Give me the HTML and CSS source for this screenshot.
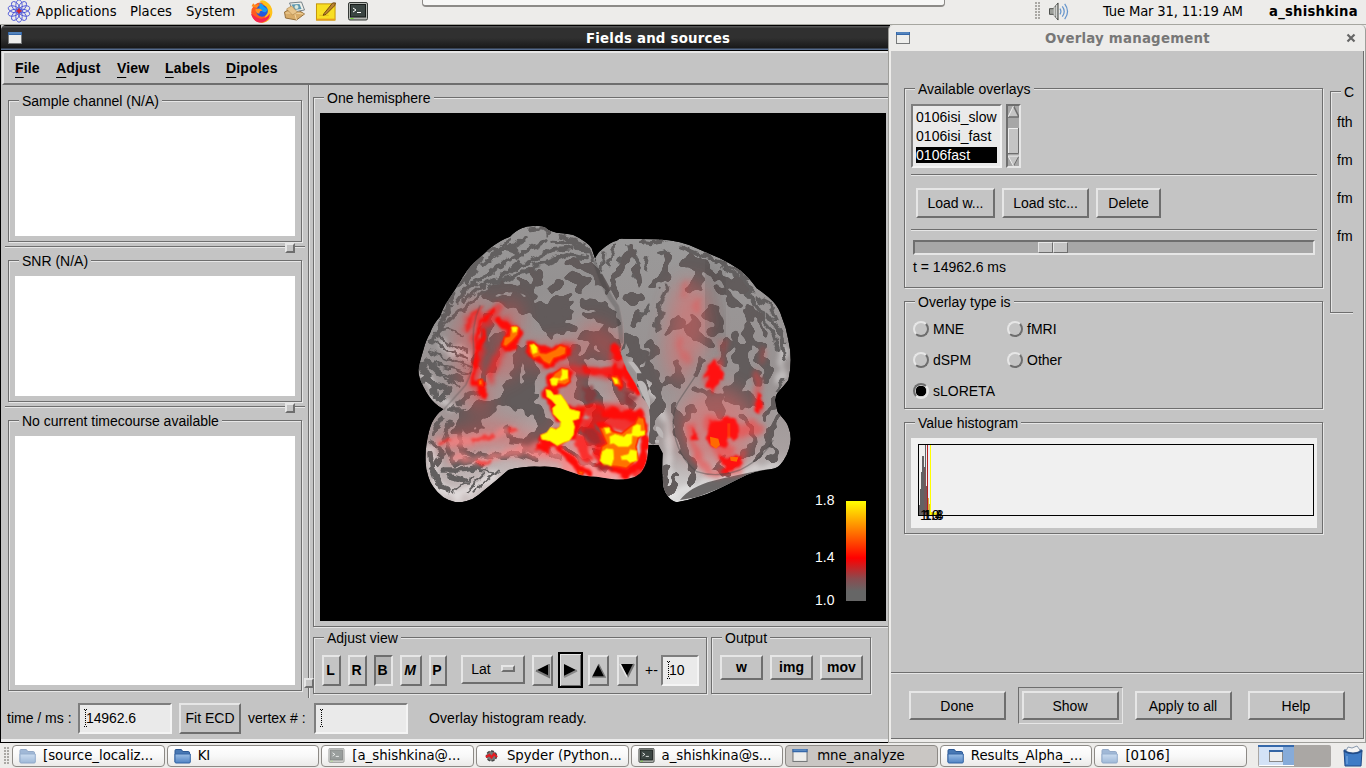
FILE: index.html
```html
<!DOCTYPE html>
<html lang="en">
<head>
<meta charset="utf-8">
<title>Fields and sources</title>
<link rel="stylesheet" href="styles.css">
</head>
<body>
<svg class="defs" width="0" height="0">
  <defs>
    <linearGradient id="fold" x1="0" y1="0" x2="0" y2="1"><stop offset="0" stop-color="#9dbfe6"/><stop offset="1" stop-color="#5083c4"/></linearGradient>
    <symbol id="i-folder" viewBox="0 0 17 16"><path d="M1 2.5Q1 1.5 2 1.5H7Q8 1.5 8.5 3.5H14.500Q15.500 3.500 15.500 5V14H1Z" fill="#4878b4" stroke="#2d5994"/><path d="M1 6H16.300V14Q16.300 15 15 15H2Q1 15 1 14Z" fill="url(#fold)" stroke="#3465a4"/></symbol>
    <symbol id="i-term" viewBox="0 0 20 20"><rect x="0.500" y="0.500" width="19" height="17.500" rx="1.500" fill="#b4b7b2" stroke="#363a37"/><rect x="2.500" y="2.500" width="15" height="12.500" fill="#3b4542" stroke="#161a18"/><path d="M5 6l3 2-3 2M9 10.500h4" stroke="#fff" fill="none"/><path d="M2.500 16.500h3" stroke="#71dc28"/></symbol>
    <symbol id="i-win" viewBox="0 0 14 12"><rect x="0.500" y="0.500" width="13" height="11" fill="#eeeeec" stroke="#77797a"/><rect x="0" y="0" width="14" height="3" fill="#3568aa"/><path d="M1 1h12" stroke="#729fcf"/></symbol>
  </defs>
</svg>
<header class="panel">
  <svg class="logo" viewBox="0 0 24 24"><g fill="none" stroke="#4a54d8" stroke-width=".9"><ellipse cx="12" cy="6.500" rx="3.200" ry="5.700"/><ellipse cx="12" cy="6.500" rx="3.200" ry="5.700" transform="rotate(36 12 12)"/><ellipse cx="12" cy="6.500" rx="3.200" ry="5.700" transform="rotate(72 12 12)"/><ellipse cx="12" cy="6.500" rx="3.200" ry="5.700" transform="rotate(108 12 12)"/><ellipse cx="12" cy="6.500" rx="3.200" ry="5.700" transform="rotate(144 12 12)"/><ellipse cx="12" cy="6.500" rx="3.200" ry="5.700" transform="rotate(180 12 12)"/><ellipse cx="12" cy="6.500" rx="3.200" ry="5.700" transform="rotate(216 12 12)"/><ellipse cx="12" cy="6.500" rx="3.200" ry="5.700" transform="rotate(252 12 12)"/><ellipse cx="12" cy="6.500" rx="3.200" ry="5.700" transform="rotate(288 12 12)"/><ellipse cx="12" cy="6.500" rx="3.200" ry="5.700" transform="rotate(324 12 12)"/></g><path d="M12 9.500v5M9.500 12h5" stroke="#d22" stroke-width="1.600"/></svg>
  <span class="pm pm1">Applications</span><span class="pm pm2">Places</span><span class="pm pm3">System</span>
  <svg class="ic ff" viewBox="0 0 22 22"><circle cx="11" cy="12" r="9.800" fill="#ff5a1f"/><path d="M9 1Q13-1 16 2Q22 6 21.300 13Q20 21 11 22Q15 17 15 13Q17 6 9 1Z" fill="#ffc21a"/><path d="M1.500 6L3 3L5 5L8 4L8 8Z" fill="#ff8a1c"/><path d="M1 13Q3 22 12 21.500Q19 20 19 13Q14 20 7 17Z" fill="#f5264f"/><circle cx="11.500" cy="10.500" r="5.600" fill="#2458dc"/><path d="M9 3Q12 3 13 6L17 9Q15 13 12 11L9 9Z" fill="#16a0f4"/><path d="M5 9Q9 7 12 10Q9 10 9 13Q6 13 5 9Z" fill="#ff9624"/></svg>
  <svg class="ic mail" viewBox="0 0 22 20"><path d="M1 11L10 6L21 13L13 19L2 17Z" fill="#d7ab68" stroke="#96703c"/><path d="M2 12L11 12L13 19M11 12L20 13" fill="none" stroke="#f1d39e"/><path d="M6 2L18 1L21 9L10 11Z" fill="#eef0ea" stroke="#77838a"/><path d="M8 3.500L16 3L18 8L11 9Z" fill="#5b97b0"/><circle cx="13" cy="6" r="2" fill="#dbe8dc"/><path d="M3 8L8 5L14 11L9 14Z" fill="#e8c48a" stroke="#a77f45" stroke-width=".6"/></svg>
  <svg class="ic note" viewBox="0 0 22 22"><rect x="1" y="3" width="19.500" height="17" fill="#f8df24" stroke="#c49304"/><path d="M1 18.500h19.500v1.800H1z" fill="#e79c1c"/><path d="M4 15h10" stroke="#e2bd18"/><path d="M9 13L18 2L21 2L20 5L11 14L8 15Z" fill="#b98334" stroke="#70470d"/></svg>
  <svg class="ic term"><use href="#i-term"/></svg>
  <span class="hidden-win"></span>
  <span class="grip"></span>
  <svg class="ic vol" viewBox="0 0 22 20"><path d="M1 7h4l5-6v18l-5-6H1Z" fill="#9ea09b" stroke="#484a47"/><path d="M6 5v10M8.500 3v14" stroke="#ddd"/><path d="M12 7q2 3 0 6M14.500 4.500q4 5.500 0 11M17 2q6 8 0 16" fill="none" stroke="#6695cc" stroke-width="1.300"/></svg>
  <span class="clock">Tue Mar 31, 11:19 AM</span><b class="user">a_shishkina</b>
</header>

<main class="mainwin">
  <div class="title dark"><svg class="wi"><use href="#i-win"/></svg><span>Fields and sources</span></div>
  <nav class="menubar"><span class="m1"><u>F</u>ile</span><span class="m2"><u>A</u>djust</span><span class="m3"><u>V</u>iew</span><span class="m4"><u>L</u>abels</span><span class="m5"><u>D</u>ipoles</span></nav>
  <div class="work">
    <section class="left">
      <div class="frame f-a"><span class="leg">Sample channel (N/A)</span><div class="plot"></div></div>
      <div class="sash"><i></i></div>
      <div class="frame f-a"><span class="leg">SNR (N/A)</span><div class="plot"></div></div>
      <div class="sash"><i></i></div>
      <div class="frame f-b"><span class="leg">No current timecourse available</span><div class="plot"></div></div>
    </section>
    <div class="vsash"><i></i></div>
    <section class="right">
      <div class="frame hemi"><span class="leg">One hemisphere</span>
        <svg class="brain" viewBox="0 0 566 508">
          <defs>
            <filter id="fold-shape" x="-5%" y="-5%" width="110%" height="110%" color-interpolation-filters="sRGB"><feTurbulence type="fractalNoise" baseFrequency=".028" numOctaves="2" seed="8" result="n"/><feDisplacementMap in="SourceGraphic" in2="n" scale="52" xChannelSelector="R" yChannelSelector="G" result="d"/><feGaussianBlur in="d" stdDeviation="3.500"/><feComponentTransfer><feFuncA type="linear" slope="7" intercept="-3"/></feComponentTransfer></filter>
            <filter id="streak" x="-5%" y="-5%" width="110%" height="110%" color-interpolation-filters="sRGB"><feTurbulence type="fractalNoise" baseFrequency=".04" numOctaves="2" seed="5" result="n"/><feDisplacementMap in="SourceGraphic" in2="n" scale="26" xChannelSelector="R" yChannelSelector="G"/></filter>
            <filter id="heat" x="-10%" y="-10%" width="120%" height="120%" color-interpolation-filters="sRGB"><feTurbulence type="fractalNoise" baseFrequency=".035" numOctaves="2" seed="3" result="n"/><feDisplacementMap in="SourceGraphic" in2="n" scale="26" xChannelSelector="R" yChannelSelector="G" result="d"/><feGaussianBlur in="d" stdDeviation="3"/></filter>
            <filter id="hot" x="-10%" y="-10%" width="120%" height="120%" color-interpolation-filters="sRGB"><feGaussianBlur stdDeviation="2"/></filter>
            <filter id="soft" x="-30%" y="-30%" width="160%" height="160%" color-interpolation-filters="sRGB"><feTurbulence type="fractalNoise" baseFrequency=".03" numOctaves="2" seed="12" result="n"/><feDisplacementMap in="SourceGraphic" in2="n" scale="40" xChannelSelector="R" yChannelSelector="G" result="d"/><feGaussianBlur in="d" stdDeviation="8"/></filter>
            <filter id="haze" x="-30%" y="-30%" width="160%" height="160%" color-interpolation-filters="sRGB"><feGaussianBlur stdDeviation="30"/></filter>
            <linearGradient id="gl" x1="0" y1="0" x2=".25" y2="1"><stop offset="0" stop-color="#9b9a9a"/><stop offset=".35" stop-color="#949191"/><stop offset=".75" stop-color="#a69a9a"/><stop offset="1" stop-color="#d0c6c6"/></linearGradient>
            <linearGradient id="gr" x1="0" y1="0" x2="0" y2="1"><stop offset="0" stop-color="#9a9999"/><stop offset=".5" stop-color="#989292"/><stop offset=".8" stop-color="#a8a0a0"/><stop offset="1" stop-color="#dedede"/></linearGradient>
            <linearGradient id="bar" x1="0" y1="0" x2="0" y2="1"><stop offset="0" stop-color="#ff0"/><stop offset=".57" stop-color="#f00"/><stop offset=".78" stop-color="#884c50"/><stop offset=".9" stop-color="#666"/><stop offset="1" stop-color="#666"/></linearGradient>
            <path id="lh" d="M400 48Q420 46 435 52Q450 65 470 68Q500 70 520 75Q540 84 555 95Q570 105 575 115Q580 130 585 145Q590 165 600 180L620 215L655 280Q670 305 672 345V400Q664 415 662 430L680 480L705 520L725 560Q745 580 748 600Q752 630 750 660L745 700Q745 735 740 750Q735 775 720 790Q705 803 690 805Q660 810 640 808L590 800Q560 799 540 795L480 775Q450 768 420 770Q395 768 370 772Q345 774 325 780L290 810L235 855Q220 868 200 873Q180 879 165 876Q145 872 130 862Q112 848 100 830Q90 818 85 800Q76 775 77 750Q76 725 80 700Q85 665 95 640Q110 610 130 598Q115 590 105 580Q85 560 70 530Q55 500 55 480Q60 450 70 420Q78 390 90 370Q100 340 120 320Q130 290 145 270L180 215Q200 180 220 160L270 115Q300 90 330 80Q350 60 365 55Q380 48 400 48Z"/>
            <path id="rh" d="M45 145Q55 125 70 115Q90 97 110 92Q120 84 130 86Q180 86 230 88Q270 90 300 97Q325 103 350 115L420 145Q450 160 480 180Q510 205 530 235Q560 255 580 275Q598 295 605 320Q620 355 625 390Q632 420 632 450Q632 480 625 510Q610 530 600 540Q588 550 585 570Q588 595 595 610Q620 635 625 650Q633 670 632 690Q630 715 620 735Q610 755 600 765Q588 776 570 778Q530 782 500 795Q450 820 420 835Q380 855 350 862Q320 873 290 877Q275 873 265 860Q253 845 250 830Q245 780 248 730L235 705L200 705L120 450Z"/>
            <clipPath id="cl"><use href="#lh"/></clipPath><clipPath id="cr"><use href="#rh"/></clipPath>
          </defs>
          <rect width="566" height="508"/>
          <g transform="translate(260 97) scale(.33333)" clip-path="url(#cr)">
            <use href="#rh" fill="url(#gr)"/>
            <g filter="url(#soft)" fill="none" stroke="#fff" opacity=".4" stroke-width="20"><path d="M260 860L400 815L520 780L600 765M150 440L230 560L265 660L265 850M610 400L600 520"/></g>
            <g filter="url(#streak)" fill="none" stroke="#625f5f" stroke-linecap="round" stroke-linejoin="round" stroke-width="12"><path d="M70 130L65 175M150 110L120 155M105 110L80 160M185 95L210 100L250 90M165 130L175 160L160 200M200 140L195 180M240 130L265 125M300 110L350 130L385 145M410 150L460 175L500 205M370 135L430 170L470 200L510 250M530 265L570 285L590 330M490 240L530 285L555 330M560 310L590 350L615 400M480 200L520 245M260 230L240 290L225 350M245 310L235 360M170 330L210 290M545 330L580 370L595 420M600 360L617 450M610 510L590 540"/></g>
            <g filter="url(#fold-shape)" fill="none" stroke="#625c5c" stroke-linecap="round" stroke-linejoin="round">
              <g stroke-width="26"><path d="M150 125L130 160L115 195M270 150L245 200L225 230M320 160L350 180L355 220L330 235M325 150L370 160L380 190M415 235L445 250L465 280M400 190L440 210L490 240M165 170L180 220M95 215L100 245L85 270M145 265L190 265M295 330L260 370M340 330L340 370L390 400M385 315L405 365M210 400L230 440M500 345L510 395L540 420L555 465M470 380L480 470L460 550L510 590M440 400L430 460M540 420L560 500M290 460L300 515L260 520M135 370L190 430L230 520L240 600M200 470L235 560L220 640"/></g>
              <g stroke-width="17"><path d="M155 345L180 310M480 310L510 320M500 290L550 330L560 370M340 490L370 450M150 440L165 450M500 440L540 520M580 580L550 620M600 600L560 710L520 750M400 560L410 580M340 590L300 640L310 700L340 760M345 540L380 560M480 610L520 660L510 720L450 760M290 590L285 660L330 760M560 680L600 730L570 750M295 790L265 850M340 740L330 820M430 740L400 780L450 790M250 780L255 830"/></g>
              <path stroke-width="42" d="M440 550L520 580M390 560L420 600M330 350L350 380M490 420L490 500M400 300L410 360"/>
              <path stroke-width="22" d="M10 220L70 280L110 350L125 420M150 390L190 530L220 690"/>
            </g>
            <path d="M300 870Q330 830 400 812Q470 795 560 778L500 795L420 835L350 862Z" fill="#6a6767"/>
            <g fill="#bcb8b8"><path d="M145 455L160 455Q175 470 185 490L170 490ZM170 515Q190 505 200 530L210 570V600L190 560ZM228 650Q240 645 250 670V685Q235 680 228 660ZM225 690h12v8h-12Z"/></g>
            <g filter="url(#haze)" fill="#ff6060" opacity=".42"><ellipse cx="330" cy="330" rx="60" ry="120"/><ellipse cx="410" cy="650" rx="115" ry="120"/><ellipse cx="300" cy="410" rx="40" ry="110"/></g>
            <g filter="url(#soft)" fill="none" stroke="#ff3838" stroke-linecap="round"><path opacity=".28" stroke-width="22" d="M320 220L315 250M355 270L350 300M290 390L320 450M430 400L420 460M545 420L550 450"/><path opacity=".5" stroke-width="22" d="M530 500L535 600M330 650L345 720L390 790L470 780L490 740"/><path opacity=".5" stroke-width="50" d="M400 640L440 740M400 470L395 520M470 660h50"/></g>
            <g filter="url(#heat)" fill="#f11"><path d="M407 440L415 475L438 490L435 505L415 510L398 545L375 530L388 500L370 500L385 465ZM395 632L468 622L474 660L460 690L445 680L435 712L392 712L380 690L388 660ZM415 740L485 740L488 760L455 790L430 790L430 765ZM530 540L545 555L540 610L530 600ZM340 650L350 690L335 690Z"/></g>
            <g filter="url(#hot)" fill="#ff6a00"><path d="M390 680L415 686L420 705L408 716L392 705ZM450 740L475 742L470 755L452 752Z"/><path d="M442 640h9v45h-9Z" opacity=".4"/></g>
            <path d="M345 500Q325 530 305 560Q275 600 280 650Q290 740 350 785Q410 805 480 780Q550 745 580 690" fill="none" stroke="#444" stroke-width="4" opacity=".4"/>
            <path d="M390 160Q380 280 425 400" fill="none" stroke="#222" stroke-width="50" opacity=".2" filter="url(#haze)"/>
          </g>
          <g transform="translate(80 97) scale(.33333)" clip-path="url(#cl)">
            <use href="#lh" fill="url(#gl)"/>
            <g filter="url(#soft)" fill="none" stroke="#fff" opacity=".45" stroke-width="26"><path d="M90 700L115 830L170 860L290 790M70 480L100 560L160 590M110 400L210 440M500 775L700 800"/></g>
            <g filter="url(#streak)" fill="none" stroke="#625f5f" stroke-linecap="round" stroke-linejoin="round">
              <g stroke-width="12"><path d="M385 58L425 55L445 70M480 78L530 92L565 120L578 150M460 95L520 100L560 130M440 90L390 115L330 145L280 185M380 85L340 110L300 120L250 165M330 85L290 120L265 115M520 115L460 120L410 145L350 175M555 145L500 135L450 155L400 165M240 135L205 185L170 235M300 160L250 205L200 235L170 275M360 155L300 205L240 230L190 270M400 175L330 200L250 245L190 300M160 250L135 300M180 300L130 345L105 370M150 290L120 340L95 400"/></g>
              <g stroke-width="7"><path d="M110 375L160 410L205 425M100 390L150 425L205 445M90 425L140 445L215 475M100 460L210 490M110 480L190 515M90 470L175 530M120 350L185 375"/></g>
              <path stroke-width="20" d="M65 465L85 500L65 515M90 515L150 540L120 570M100 530L105 560M150 510L180 500M80 455L120 490M240 145L220 180L200 215M320 110L345 120M375 125L350 140M275 140L300 130"/>
              <g stroke-width="17"><path d="M175 580L210 550L240 545M150 600L190 600M125 625L100 670M150 640L130 690M100 700L130 730L110 760M140 700L160 760L220 750M180 680L190 730L270 740M320 650L330 690L380 700M130 780L180 780L240 770M100 780L120 830L150 840M150 800L190 810M280 740L350 730L410 750M370 720L430 720L480 740M90 730L95 780"/></g>
              <path stroke-width="6" d="M220 800L160 850M255 790L200 845M285 785L220 845M240 780L300 785"/>
            </g>
            <g filter="url(#fold-shape)" fill="none" stroke="#625b5b" stroke-linecap="round" stroke-linejoin="round">
              <g stroke-width="27"><path d="M515 165L560 160L590 190L620 240M500 195L560 215L535 240M395 180L420 200L410 220M455 230L475 228M275 240L345 225L395 245L385 270L340 265M265 255L330 285L400 305L440 290M555 275L590 285L640 310M450 330L470 275L505 270L500 310L450 350L520 350L450 375M550 380L585 375L560 440M610 360L640 385M600 320L645 340M570 430L610 440"/></g>
              <g stroke-width="37"><path d="M405 300L440 350M395 285L480 310M460 350L480 360M610 390L650 440M265 330L255 400L240 460M310 380L270 460L245 520M350 430L345 500L310 570L260 600L210 650M380 420L400 500L370 580L400 600M520 430L550 500L555 580M590 560L600 620L570 680M650 520L680 580M560 660L620 690M410 600L440 650L390 700M250 590L190 620L170 655M360 540L335 580"/></g>
              <path stroke-width="20" d="M500 720L560 760L620 775M580 720L630 740M660 560L700 540M630 500L670 550M560 320L600 310"/>
            </g>
            <g filter="url(#haze)" fill="none" stroke="#ff4040" stroke-width="60" stroke-linecap="round" opacity=".42"><path d="M230 300L200 380L215 520L240 580M330 300L310 480M140 700L300 670L420 720L600 750M580 370L650 430L700 600L620 700M400 440L520 430L500 660"/></g>
            <g filter="url(#soft)" fill="none" stroke="#ff2020" stroke-linecap="round" stroke-linejoin="round" opacity=".65"><path stroke-width="26" d="M290 300L240 350L235 430L220 510L250 550M310 330L345 380L305 420L270 500M400 410L435 460L505 410M455 530L495 480L550 485L640 490M600 590L670 600L720 640M560 650L590 730L700 780M640 420L700 540M195 350L240 310"/><path stroke="#ff8080" stroke-width="24" d="M120 700L250 685L340 660M160 745L250 750L410 710L540 770"/><path stroke="#ff7a7a" stroke-width="34" d="M500 780L620 795L700 790M540 700L560 760M470 720L400 730"/></g>
            <g filter="url(#heat)" fill="none" stroke="#ff0c08" stroke-linejoin="round" stroke-linecap="round">
              <path stroke-width="10" d="M280 300L242 335L232 390L227 460L212 525M255 360L238 420"/>
              <path opacity=".55" stroke-width="8" d="M250 290L205 325L202 365"/>
              <path stroke-width="20" d="M222 520L245 520L250 560"/>
              <path opacity=".55" stroke-width="14" d="M220 695L280 675M330 665L345 660M120 700L145 690M240 760L270 755"/>
              <path stroke-width="18" d="M415 710L440 720M300 335L330 355M475 715L500 735L540 780L570 795"/>
              <path stroke-width="44" d="M322 405L348 370"/>
              <path stroke-width="46" d="M400 415L440 450L490 425M465 515L495 495M450 550L480 610L530 610L510 670L440 690"/>
              <path opacity=".75" stroke-width="30" d="M560 480L690 490L710 530M540 595L600 600L700 620"/>
              <path stroke-width="24" d="M640 415L655 440M675 480L715 545M645 470L665 530M610 610L720 610L740 700L725 770M610 650L640 680L690 700M600 760L680 795L725 750"/>
              <path opacity=".7" stroke-width="34" d="M550 640L600 690L600 740L720 790M540 690L560 740M640 640L720 620M580 630L700 650"/>
            </g>
            <g filter="url(#hot)" fill="#ff7300" stroke="#ff2a00" stroke-width="5" stroke-linejoin="round"><path d="M332 352Q345 345 357 355L354 375L338 393L318 410L308 405L313 382L328 378ZM388 402Q405 398 413 408L422 428L438 430L465 418L480 405L499 412L497 432L480 440L462 445L450 465L430 455L418 440L400 445L388 425ZM450 515L463 490L485 475L505 478L510 515L495 525L475 522L460 533ZM635 500L652 498L660 510L665 528L645 525ZM235 510L247 508L248 527L236 525ZM600 655L620 648L640 665L665 670L690 650L705 640L715 620L732 625L738 665L715 685L708 710L715 745L695 762L680 775L650 770L610 768L600 735L605 710L620 700ZM535 782L550 785L548 795L535 792Z"/></g>
            <g filter="url(#hot)" fill="#ff0" stroke="#ffb000" stroke-width="3" stroke-linejoin="round"><path d="M334 352Q345 347 353 352L350 366L338 368ZM390 405L402 402L412 412V428L398 432ZM485 477L503 480L504 505L485 512L475 510L470 526L455 526L450 508L460 502L480 506L485 495ZM438 538L452 542L462 555L482 553L498 575L510 597L540 605L537 626L518 632L524 650L520 675L508 692L490 698L472 707L450 693L425 688L422 675L440 668L452 652L468 658L480 650L482 635L460 612L457 595L468 585L455 570L440 560ZM637 502L652 507L655 520L645 522ZM612 654L628 652L632 668L618 672ZM628 680L645 672L672 680L680 672L695 670L698 650L712 642L722 645V662H735L734 675L715 680L697 678L696 700L685 710L655 710L640 700L630 703ZM606 725L620 715L640 718L642 745L634 768L610 762L600 752ZM662 738L685 732L690 718L710 722L712 752L690 758L680 750L665 750Z"/></g>
            <g filter="url(#heat)" fill="#8e3236" opacity=".7"><path d="M555 650L590 660L600 690L575 705L550 680ZM545 530L580 525L590 570L560 585ZM590 765h35l15 16h-40ZM670 550L710 560L700 590L680 580Z"/></g>
            <path d="M240 285Q212 350 221 420Q220 480 197 525L130 600" fill="none" stroke="#4d4848" stroke-width="4" opacity=".4"/>
            <path d="M585 150Q610 240 650 290Q662 340 664 400" fill="none" stroke="#333" stroke-width="14" opacity=".25"/>
          </g>
          <g class="scale-text"><text x="495" y="392">1.8</text><text x="495" y="449">1.4</text><text x="495" y="492">1.0</text></g>
          <rect x="526" y="388" width="20" height="100" fill="url(#bar)"/>
        </svg>
      </div>
      <div class="controls">
        <div class="frame adj"><span class="leg">Adjust view</span>
          <div class="row">
            <button class="l">L</button><button class="r">R</button><button class="b">B</button><button class="m">M</button><button class="p">P</button>
            <button class="lat">Lat<i></i></button>
            <button class="ar"><svg viewBox="0 0 17 27"><path d="M15 7V20L2 13.500Z"/><path d="M2 13.500L15 20V7" fill="none" stroke="#777" stroke-width="2"/></svg></button>
            <button class="ar on"><svg viewBox="0 0 17 27"><path d="M2 7V20L15 13.500Z"/><path d="M2 20L15 13.500" stroke="#888" stroke-width="2"/></svg></button>
            <button class="ar up"><svg viewBox="0 0 17 27"><path d="M2 20H15L8.500 7Z"/><path d="M2 20H15L8.500 7" fill="none" stroke="#777" stroke-width="1.500"/></svg></button>
            <button class="ar dn"><svg viewBox="0 0 17 27"><path d="M2 7H15L8.500 20Z"/><path d="M15 7L8.500 20" stroke="#777" stroke-width="2"/><path d="M1 7L8 20" stroke="#e6e6e6" stroke-width="1.500"/></svg></button>
            <span class="pm-label">+-</span><span class="field f10"><i class="caret"></i>10</span>
          </div>
        </div>
        <div class="frame out"><span class="leg">Output</span><div class="row"><button>w</button><button>img</button><button>mov</button></div></div>
      </div>
    </section>
  </div>
  <footer class="status"><span class="s1">time / ms :</span><span class="field"><i class="caret"></i>14962.6</span><button>Fit ECD</button><span class="s2">vertex # :</span><span class="field"><i class="caret"></i></span><span class="s3">Overlay histogram ready.</span></footer>
</main>

<aside class="overlay">
  <div class="title light"><svg class="wi"><use href="#i-win"/></svg><span>Overlay management</span><svg class="close" viewBox="0 0 10 10"><path d="M1.500 1.500L8.500 8.500M8.500 1.500L1.500 8.500" stroke="#666" stroke-width="2.200"/></svg></div>
  <div class="obody">
    <div class="ocols">
      <div class="ocol">
        <div class="frame avail"><span class="leg">Available overlays</span>
          <div class="lists"><div class="list"><span>0106isi_slow</span><span>0106isi_fast</span><span class="sel">0106fast</span></div>
            <div class="scroll"><svg viewBox="0 0 11 60"><path d="M5.500 0L11 11H0Z" fill="#c4c4c4"/><path d="M0 11H11L5.500 0" fill="none" stroke="#6e6e6e" stroke-width="1.500"/><path d="M5.500 0L0 11" stroke="#eee"/><rect x="0" y="22" width="11" height="26" fill="#c4c4c4"/><path d="M.5 48V22.500H11" fill="none" stroke="#eee"/><path d="M0 47.500H10.500V22" fill="none" stroke="#6e6e6e"/><path d="M0 50H11L5.500 60Z" fill="#c4c4c4"/><path d="M11 50L5.500 60" stroke="#6e6e6e"/><path d="M5.500 60L0 50H11" fill="none" stroke="#eee"/></svg></div></div>
          <hr><div class="obtns"><button class="lw">Load w...</button><button class="ls">Load stc...</button><button class="de">Delete</button></div><hr>
          <div class="slider"><i></i><i></i></div><div class="tms">t = 14962.6 ms</div>
        </div>
        <div class="frame otype"><span class="leg">Overlay type is</span><div class="radios"><span><i></i>MNE</span><span><i></i>fMRI</span><span><i></i>dSPM</span><span><i></i>Other</span><span><i class="sel"></i>sLORETA</span></div></div>
        <div class="frame histo"><span class="leg">Value histogram</span>
          <svg viewBox="0 0 406 90"><rect width="406" height="90" fill="#f0f0f0"/><path d="M8 77V67H9V51H10V34H11V18H13V29H14V7H15V48H17V77Z" fill="#636163"/><path d="M13 77V30H15V48H17V77Z" fill="#74595b"/><path d="M16.500 7v70" stroke="#b81b1e"/><path d="M17 77V60H18V66H20V74H23V76H31V78Z" fill="#d7b13c"/><path d="M19.500 7v70" stroke="#ff0"/><path d="M20 75.500h9" stroke="#ee0" stroke-width="2"/><rect x="7.500" y="6.500" width="395" height="71" fill="none" stroke="#000"/><g class="ht"><text x="9" y="82">1.0</text><text x="12" y="82">1.4</text><text x="13" y="82">1.8</text></g></svg>
        </div>
      </div>
      <div class="cut frame"><span class="leg">C</span><span>fth</span><span>fm</span><span>fm</span><span>fm</span></div>
    </div>
    <div class="actions"><button>Done</button><span class="ring"><button>Show</button></span><button>Apply to all</button><button>Help</button></div>
  </div>
</aside>

<footer class="taskbar">
  <span class="grip"></span>
  <div class="tasks">
    <span class="t dim"><svg><use href="#i-folder"/></svg>[source_localiz...</span>
    <span class="t"><svg><use href="#i-folder"/></svg>KI</span>
    <span class="t dim"><svg><use href="#i-term"/></svg>[a_shishkina@...</span>
    <span class="t"><svg viewBox="0 0 16 16"><circle cx="8" cy="8" r="5" fill="#777" stroke="#444" stroke-width="1.500" stroke-dasharray="3 1.500"/><path d="M2.500 9L6 7L8 9.500L10.500 6L13.500 9" fill="none" stroke="#e31c22" stroke-width="2.200"/></svg>Spyder (Python...</span>
    <span class="t"><svg><use href="#i-term"/></svg>a_shishkina@s...</span>
    <span class="t act"><svg class="w"><use href="#i-win"/></svg>mne_analyze</span>
    <span class="t"><svg><use href="#i-folder"/></svg>Results_Alpha_...</span>
    <span class="t dim"><svg><use href="#i-folder"/></svg>[0106]</span>
  </div>
  <svg class="pager" viewBox="0 0 73 22"><rect width="73" height="22" rx="2" fill="#aaa7a4"/><path d="M1 1H36V20H1Z" fill="#d3e2f6"/><path d="M25 1H36V20H25Z" fill="#86abd9"/><path d="M0 1H36" stroke="#3568aa" stroke-width="2"/><path d="M1 20.500H36" stroke="#fff"/><rect x="11.500" y="5.500" width="13" height="11" fill="#eee" stroke="#888"/><path d="M11 6h14" stroke="#3465a4" stroke-width="2"/></svg>
  <svg class="trash" viewBox="0 0 20 22"><path d="M1 5H19L18 21H2Z" fill="#3f7cc6" stroke="#204a87"/><path d="M3 6L5 2L9 3L14 1L17 5L16 7Q10 9 4 7Z" fill="#f4f4f4" stroke="#8899ad"/><path d="M1 6Q10 11 19 6" fill="none" stroke="#214c89" stroke-width="1.600"/><path d="M4 11V19" stroke="#80afe6"/></svg>
</footer>
</body>
</html>
```

FILE: styles.css
```css
* { box-sizing: border-box; }
body { margin: 0; width: 1366px; height: 768px; overflow: hidden; background: #edecea; position: relative; font: 14px/16px "Liberation Sans", Arial, sans-serif; color: #000; }
.defs { position: absolute; }
svg { display: block; flex: none; }
button { font: inherit; color: #000; padding: 0; margin: 0; background: #c4c4c4; border: 2px solid; border-color: #e6e6e6 #6e6e6e #6e6e6e #e6e6e6; border-radius: 0; white-space: nowrap; flex: none; }
span { white-space: nowrap; }

.panel { height: 25px; display: flex; align-items: center; padding-bottom: 2px; border-bottom: 1px solid #a6a6a0; background: #edecea; font: 13.2px/22px "DejaVu Sans", sans-serif; }
.pm, .clock, .user { padding-top: 2px; }
.logo { width: 24px; height: 24px; margin-left: 7px; margin-right: 5px; }
.pm1 { width: 94px; }
.pm2 { width: 56px; }
.pm3 { width: 64px; }
.ff { width: 23px; height: 23px; margin-top: 1px; }
.mail { width: 23px; height: 20px; margin-left: 10px; }
.note { width: 22px; height: 21px; margin-left: 9px; margin-right: 1px; }
.term { width: 20px; height: 20px; margin-left: 10px; margin-right: 1px; margin-top: 2px; }
.hidden-win { width: 523px; height: 7px; margin-left: 53px; align-self: flex-start; border: 1px solid #8d8b88; border-width: 0 1px 2px; border-radius: 0 0 4px 4px; background: #f7f7f6; }
.grip { width: 5px; height: 18px; background: radial-gradient(circle at 1px 1px, #aaa8a4 .8px, transparent 1px) 0 0 / 3px 3px; flex: none; }
.panel .grip { margin-left: 90px; }
.vol { width: 22px; height: 19px; margin-left: 8px; margin-top: 1px; }
.clock { margin-left: 33px; width: 166px; letter-spacing: -.19px; }
.user { letter-spacing: .25px; }

.mainwin { position: absolute; left: 0; top: 25px; width: 890px; height: 718px; background: #c4c4c4; border-left: 1px solid #000; border-bottom: 1px solid #000; box-shadow: inset 0 -3px #ececec; }
.title { height: 26px; display: flex; align-items: center; font: bold 13.33px/24px "DejaVu Sans", sans-serif; letter-spacing: .22px; }
.title span { padding-top: 2px; }
.title .wi { width: 14px; height: 12px; }
.dark { background: linear-gradient(#000 0 1px, #555 1px 2px, #303030 3px 13px, #191919 23px, #556b8d 24px 25px, #000 25px); color: #fff; border-radius: 5px 0 0; padding-left: 7px; }
.dark span { margin-left: 564px; }
.menubar { height: 34px; margin-left: 1px; border-top: 2px solid #e6e6e6; border-left: 2px solid #e6e6e6; border-bottom: 2px solid #6e6e6e; padding: 7px 0 0 11px; font-weight: bold; display: flex; }
.menubar u { text-underline-offset: 4px; text-decoration-thickness: 1px; }
.m1 { width: 41px; } .m2 { width: 61px; } .m3 { width: 48px; } .m4 { width: 61px; }
.menubar span { letter-spacing: .15px; }

.work { height: 613px; display: flex; overflow: hidden; }
.frame { border: 1px solid #6e6e6e; box-shadow: 1px 1px #e6e6e6, inset 1px 1px #e6e6e6; }
.leg { display: block; width: max-content; height: 16px; margin: -8px 0 0 10px; padding: 0 3px; background: #c4c4c4; }
.left { width: 307px; padding: 15px 0 0 4px; flex: none; }
.left .frame { width: 294px; margin-left: 3px; }
.left .plot { width: 280px; height: 120px; background: #fff; margin: 7px 0 0 6px; }
.f-a { height: 142px; }
.f-b { height: 271px; }
.left .f-b .plot { height: 249px; }
.sash { height: 18px; width: 300px; background: linear-gradient(#6e6e6e 0 1px, #e6e6e6 1px 2px) 0 4px / 100% 2px no-repeat; padding: 1px 0 0 280px; }
.sash i, .vsash i { display: block; width: 10px; height: 10px; background: #c4c4c4; border: 2px solid; border-color: #e6e6e6 #6e6e6e #6e6e6e #e6e6e6; }
.vsash { width: 2px; flex: none; background: linear-gradient(90deg, #6e6e6e 0 1px, #e6e6e6 1px 2px); position: relative; }
.vsash i { position: absolute; left: -4px; top: 593px; z-index: 1; }
.right { width: 585px; padding: 12px 0 0 3px; flex: none; }
.hemi { width: 600px; height: 530px; }
.brain { width: 566px; height: 508px; margin: 7px 0 0 6px; }
.scale-text { fill: #fff; font: 14px "Liberation Sans", sans-serif; }
.controls { display: flex; margin-top: 10px; gap: 4px; }
.adj { width: 394px; height: 57px; }
.out { width: 160px; height: 57px; }
.row { display: flex; align-items: center; height: 32px; margin: 8px 0 0 8px; font-weight: bold; }
.row button { height: 31px; width: 19px; margin-right: 7px; padding-right: 2px; }
.row .b { border-color: #6e6e6e #e6e6e6 #e6e6e6 #6e6e6e; background: #b4b4b4; }
.row .m { width: 22px; font-style: italic; }
.row .p { width: 18px; margin-right: 14px; }
.row .lat { width: 64px; height: 29px; font-weight: normal; display: flex; align-items: center; justify-content: center; gap: 10px; margin-top: -2px; padding: 0 0 1px; }
.lat i { width: 14px; height: 7px; border: 2px solid; border-color: #e6e6e6 #6e6e6e #6e6e6e #e6e6e6; }
.row .ar { width: 21px; margin-right: 5px; padding: 0; }
.ar svg { width: 17px; height: 27px; }
.row .ar.on { width: 25px; height: 36px; border: 2px solid #000; padding: 0 2px; box-shadow: inset 1px 1px #e6e6e6, inset -1px -1px #6e6e6e; }
.row .up { margin-right: 8px; }
.row .dn { margin-right: 7px; }
.pm-label { width: 16px; font-weight: normal; }
.field { display: flex; align-items: center; width: 94px; height: 31px; padding-left: 4px; border: 2px solid; border-color: #7e7e7e #f4f4f4 #f4f4f4 #7e7e7e; background: #eaeaea; font-weight: normal; flex: none; letter-spacing: -.1px; }
.f10 { width: 38px; }
.caret { width: 3px; height: 18px; background: repeating-linear-gradient(#000 0 1px, transparent 1px 2px) 1px 0 / 1px 100% no-repeat; border: dotted #000; border-width: 1px 0; flex: none; margin-right: -1px; }
.out .row { margin-top: 9px; height: 24px; }
.out .row button { width: 43px; height: 25px; line-height: 18px; padding: 0; }
.status { display: flex; align-items: center; height: 42px; margin: -1px 0 0 6px; }
.s1 { width: 71px; }
.status button { width: 62px; height: 31px; margin: 0 7px; }
.s2 { width: 66px; }
.s3 { margin-left: 21px; letter-spacing: .1px; }

.overlay { position: absolute; left: 888px; top: 25px; width: 478px; height: 718px; background: #edecea; border: 1px solid #9e9e9a; border-top: 0; border-radius: 5px 5px 0 0; }
.light { color: #777; padding-left: 7px; }
.light span { margin-left: 135px; flex: 1; }
.close { width: 10px; height: 10px; margin-right: 9px; }
.obody { margin-left: 2px; width: 473px; height: 688px; background: #c4c4c4; border-right: 1px solid #6e6e6e; border-bottom: 1px solid #6e6e6e; }
.ocols { height: 622px; display: flex; padding: 37px 0 0 13px; border-bottom: 1px solid #6e6e6e; box-shadow: 0 1px #e6e6e6; }
.ocol { width: 419px; flex: none; }
.avail { height: 200px; }
.lists { display: flex; margin: 7px 0 0 6px; height: 64px; gap: 4px; }
.list { width: 91px; border: 2px solid; border-color: #7e7e7e #f4f4f4 #f4f4f4 #7e7e7e; background: #eaeaea; padding: 3px; }
.list span { display: block; height: 16px; margin-bottom: 3px; width: 81px; letter-spacing: .05px; }
.list .sel { background: #000; color: #fff; }
.scroll { width: 15px; background: #a7a7a7; border: 2px solid; border-color: #6e6e6e #e6e6e6 #e6e6e6 #6e6e6e; }
.scroll svg { width: 11px; height: 60px; }
hr { height: 2px; border: 0; border-top: 1px solid #6e6e6e; border-bottom: 1px solid #e6e6e6; margin: 6px 5px 0 6px; }
.obtns { display: flex; margin: 12px 0 0 11px; gap: 7px; }
.obtns button { height: 30px; }
.obtns + hr { margin-top: 11px; }
.lw { width: 79px; } .ls { width: 87px; } .de { width: 65px; }
.slider { display: flex; width: 402px; height: 15px; margin: 9px 0 0 8px; padding-left: 123px; background: #a7a7a7; border: 2px solid; border-color: #6e6e6e #e6e6e6 #e6e6e6 #6e6e6e; }
.slider i { width: 15px; height: 11px; background: #c4c4c4; border: 1px solid; border-color: #e6e6e6 #6e6e6e #6e6e6e #e6e6e6; }
.tms { margin: 4px 0 0 8px; }
.otype { height: 108px; margin-top: 13px; }
.radios { display: grid; grid-template-columns: 94px 100px; grid-auto-rows: 31px; align-items: center; margin: 3px 0 0 8px; }
.radios span { display: flex; align-items: center; gap: 4px; }
.radios i { width: 16px; height: 16px; border-radius: 50%; border: 2px solid; border-color: #e6e6e6 #6e6e6e #6e6e6e #e6e6e6; }
.radios .sel { border-color: #6e6e6e #e6e6e6 #e6e6e6 #6e6e6e; background: radial-gradient(circle, #000 5px, transparent 5.500px); }
.histo { height: 112px; margin-top: 13px; }
.histo svg { width: 406px; height: 90px; margin: 7px 0 0 6px; }
.ht { font: 14px "Liberation Sans", sans-serif; }
.cut { width: 23px; height: 222px; margin: 3px 0 0 7px; border-right: 0; box-shadow: 0 1px #e6e6e6, inset 1px 1px #e6e6e6; }
.cut span { display: block; height: 38px; padding-left: 6px; }
.cut .leg { height: 30px; margin: -8px 0 0 10px; padding: 0 0 0 3px; background: linear-gradient(#c4c4c4 0 0) 0 0 / 100% 16px no-repeat; }
.actions { display: flex; align-items: center; height: 65px; padding-left: 18px; gap: 16px; }
.actions button { width: 97px; height: 29px; padding-right: 1px; }
.ring { padding: 3px; margin: 0 -4px; border: 1px solid; border-color: #6e6e6e #e6e6e6 #e6e6e6 #6e6e6e; }

.taskbar { position: absolute; left: 0; top: 743px; width: 1366px; height: 25px; display: flex; align-items: center; background: #edecea; font: 13.33px/20px "DejaVu Sans", sans-serif; }
.taskbar .grip { margin-left: 4px; margin-right: 3px; }
.tasks { display: grid; grid-template-columns: repeat(8, 1fr); gap: 2px; width: 1235px; flex: none; }
.t { display: flex; align-items: center; height: 22px; padding-left: 6px; gap: 7px; letter-spacing: -.02px; border: 1px solid #8d8a86; border-radius: 4px; background: linear-gradient(#fff, #f8f8f8 50%, #ebeae8); }
.t svg { width: 17px; height: 16px; }
.t .w { width: 16px; height: 13px; margin-right: 2px; }
.dim svg { opacity: .5; }
.act { background: #c9c6c3; }
.pager { width: 73px; height: 22px; margin-left: 11px; }
.trash { width: 20px; height: 22px; margin-left: 12px; }
```
